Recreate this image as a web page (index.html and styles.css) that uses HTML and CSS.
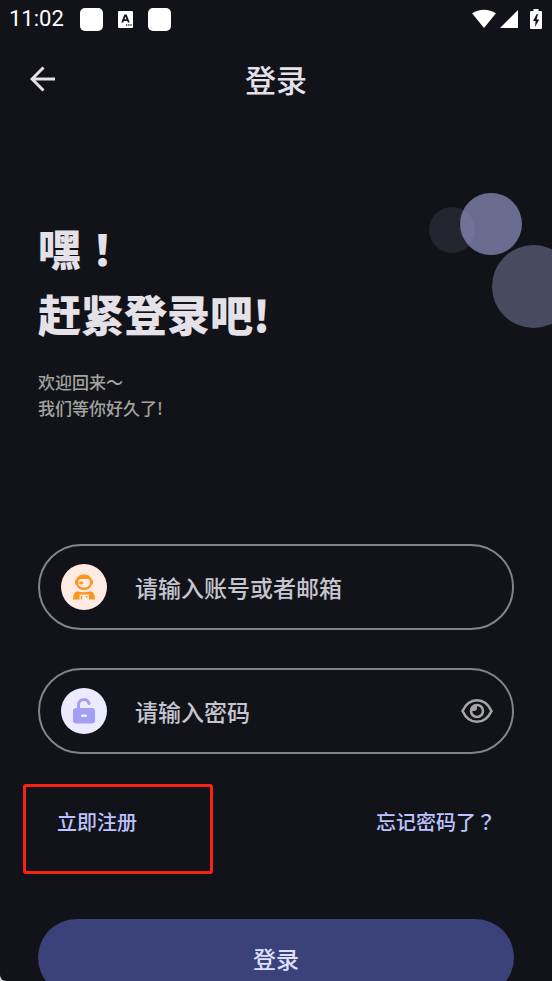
FILE: index.html
```html
<!DOCTYPE html>
<html lang="zh-CN">
<head>
<meta charset="utf-8">
<meta name="viewport" content="width=device-width, initial-scale=1">
<title>登录</title>
<link rel="stylesheet" href="styles.css">
</head>
<body>
<div class="screen">
  <div class="status">
    <span class="time">11:02</span>
    <span class="notice"></span>
    <svg class="notice-a" width="16" height="17" viewBox="0 0 16 17" aria-hidden="true">
      <rect width="15" height="17" rx="1" fill="#fff"/>
      <path d="M4.200 11.500 7 4.500h1l2.800 7M5.500 9.200h4" fill="none" stroke="#121318" stroke-width="1.800"/>
      <path d="M8 14h1.200M10.200 14h1.200M12.400 14h1.200" stroke="#121318" stroke-width="1.300"/>
    </svg>
    <span class="notice"></span>
    <span class="system">
      <svg width="24" height="20" viewBox="0 0 24 20" aria-hidden="true"><path d="M0 4.200Q5.500 .700 12 .700T24 4.200L12 19Z" fill="#fff"/></svg>
      <svg width="18" height="18" viewBox="0 0 18 18" aria-hidden="true"><path d="M18 0V18H0Z" fill="#fff"/></svg>
      <svg width="12" height="20" viewBox="0 0 12 20" aria-hidden="true"><path d="M3.500 0h5v2H11a1 1 0 0 1 1 1v16a1 1 0 0 1-1 1H1a1 1 0 0 1-1-1V3a1 1 0 0 1 1-1h2.500Z" fill="#fff"/><path d="M6.800 5 3 12h2.600L5 18l4.300-7.600H6.600L8 5Z" fill="#121318"/></svg>
    </span>
  </div>

  <header class="appbar">
    <button class="back" type="button" aria-label="返回">
      <svg width="26" height="26" viewBox="0 0 26 26" aria-hidden="true"><path d="M25 13H3M13.500 1.500 2 13l11.500 11.500" fill="none" stroke="#e4e1e9" stroke-width="3"/></svg>
    </button>
    <span class="title">登录</span>
  </header>

  <main>
    <section class="hero">
      <div class="bubbles" aria-hidden="true">
        <span class="bubble small"></span>
        <span class="bubble large"></span>
        <span class="bubble medium"></span>
      </div>
      <h1>嘿<span class="mark" lang="zh-TW">！</span><br>赶紧登录吧!</h1>
      <p>欢迎回来<span class="mark" lang="zh-TW">～</span><br>我们等你好久了!</p>
    </section>

    <form class="form">
      <div class="field">
        <label class="badge account" for="account" aria-label="账号">
          <svg width="22" height="26" viewBox="0 0 22 26" aria-hidden="true">
            <path fill="#fb961c" fill-rule="evenodd" d="M11 .500C6.500 .500 4.200 2.700 3.300 5.500C1.500 6 1.500 10.500 3.300 11C4.500 14 7.500 16 11 16S17.500 14 18.700 11C20.500 10.500 20.500 6 18.700 5.500C17.800 2.700 15.500 .500 11 .500ZM8 5h6.500C16.500 5 17 6.500 17 8.500C17 11.500 14.500 13.500 11 13.500S5 11.500 5 8.500C5 6.500 6 5 8 5Z"/>
            <path d="M5.500 9h5M8.200 7.200v3.600" stroke="#fb961c" stroke-width="1.400"/>
            <path fill="#fb961c" d="M4 17.200Q11 19.500 18 17.200Q22 18.500 22 25.500H16V20.500H6.500v5H0Q0 18.500 4 17.200Z"/>
            <path fill="#fb961c" d="M7.800 22h1.400v3.500H7.800ZM12.800 22h1.700v1.600h-1.700Z"/>
          </svg>
        </label>
        <input id="account" type="text" placeholder="请输入账号或者邮箱">
      </div>

      <div class="field">
        <label class="badge password" for="password" aria-label="密码">
          <svg width="22" height="26" viewBox="0 0 22 26" aria-hidden="true">
            <path d="M5.500 11V7.500C5.500 .200 14.500-.200 16 5.500" fill="none" stroke="#a29ff5" stroke-width="3" stroke-linecap="round"/>
            <rect y="10" width="22" height="15.500" rx="3" fill="#a29ff5"/>
            <rect x="8" y="16.500" width="6" height="2.500" rx="1" fill="#eceaff"/>
          </svg>
        </label>
        <input id="password" type="password" placeholder="请输入密码">
        <button class="reveal" type="button" aria-label="显示密码">
          <svg width="32" height="26" viewBox="0 0 32 26" aria-hidden="true">
            <path d="M1.500 13C5 5.500 10 2.200 16 2.200S27 5.500 30.500 13C27 20.500 22 23.800 16 23.800S5 20.500 1.500 13Z" fill="none" stroke="#a5a6a4" stroke-width="2.600"/>
            <circle cx="16" cy="13" r="6" fill="none" stroke="#a5a6a4" stroke-width="2.600"/>
            <path d="M16 7V10A3 3 0 0 1 13 13H10Q10 7 16 7Z" fill="#a5a6a4"/>
          </svg>
        </button>
      </div>

      <div class="links">
        <a class="register" href="#register">立即注册</a>
        <a href="#forgot">忘记密码了<span class="mark" lang="zh-TW">？</span></a>
      </div>

      <button class="submit" type="submit">登录</button>
    </form>
  </main>
</div>
</body>
</html>
```
FILE: styles.css
```css
*,
*::before {
  box-sizing: border-box;
}

body {
  margin: 0;
  background: #d8d8da;
  font-family: "Noto Sans CJK SC", sans-serif;
}

.screen {
  height: 100vh;
  overflow: hidden;
  border-bottom-left-radius: 6px;
  background: #121318;
  color: #e4e1e9;
}

button {
  padding: 0;
  border: 0;
  background: none;
  color: inherit;
  font: inherit;
  cursor: pointer;
}

svg {
  display: block;
}

.mark {
  font-family: "Noto Sans CJK TC", sans-serif;
}

.status {
  display: flex;
  align-items: center;
  height: 38px;
  padding: 0 10px 0 9px;
  color: #fff;
}

.time {
  margin-right: 16px;
  font: 400 22px/38px Roboto, sans-serif;
}

.notice {
  width: 23px;
  height: 23px;
  border-radius: 5px;
  background: #fff;
}

.notice-a {
  margin: 0 14px 0 15px;
}

.system {
  display: flex;
  align-items: center;
  gap: 4px;
  margin-left: auto;
}

.system svg:last-child {
  margin-left: 8px;
}

.appbar {
  display: grid;
  grid-template-columns: 26px 1fr 26px;
  align-items: center;
  height: 82px;
  padding: 0 30px;
}

.title {
  font-size: 31px;
  font-weight: 500;
  line-height: 40px;
  text-align: center;
}

.hero {
  position: relative;
  padding: 94px 38px 0;
}

h1 {
  margin: 0;
  font-size: 43px;
  font-weight: 900;
  line-height: 66px;
}

.hero p {
  margin: 23px 0 0;
  color: #a3a3a1;
  font-size: 17px;
  font-weight: 500;
  line-height: 26px;
}

.bubbles {
  position: absolute;
  top: 73px;
  right: 0;
  width: 123px;
  height: 136px;
  overflow: hidden;
}

.bubble {
  position: absolute;
  border-radius: 50%;
}

.small {
  top: 14px;
  left: 0;
  width: 46px;
  height: 46px;
  background: #24252f;
}

.large {
  top: 52px;
  left: 63px;
  width: 83px;
  height: 83px;
  background: #484a60;
}

.medium {
  top: 0;
  left: 31px;
  width: 62px;
  height: 62px;
  background: rgba(164, 168, 222, 0.6);
}

.form {
  display: flex;
  flex-direction: column;
  gap: 38px;
  padding: 123px 38px 0;
}

.field {
  display: flex;
  align-items: center;
  height: 86px;
  padding: 0 19px 0 21px;
  border: 2px solid #83848a;
  border-radius: 43px;
}

.badge {
  display: grid;
  flex: none;
  place-items: center;
  width: 46px;
  height: 46px;
  border-radius: 50%;
}

.account {
  background: #ffebe2;
}

.password {
  background: #eceaff;
}

.field input {
  flex: 1;
  min-width: 0;
  height: 46px;
  margin-left: 28px;
  padding: 0;
  border: 0;
  outline: 0;
  background: none;
  color: #e4e1e9;
  font: 500 23px/46px "Noto Sans CJK SC", sans-serif;
}

.field input::placeholder {
  color: #c7c5d0;
  opacity: 1;
}

.links {
  display: flex;
  justify-content: space-between;
  margin-top: 16px;
  padding: 0 18px 0 19px;
  font-size: 20px;
  font-weight: 500;
  line-height: 28px;
}

.links a {
  color: #bcc3ff;
  text-decoration: none;
}

.register {
  position: relative;
}

.register::before {
  position: absolute;
  top: -24px;
  left: -34px;
  width: 190px;
  height: 90px;
  border: 3px solid #f92314;
  border-radius: 3px;
  content: "";
}

.submit {
  height: 77px;
  margin-top: 45px;
  border-radius: 39px;
  background: #3a4279;
  color: #dfe0ff;
  font-size: 23px;
  font-weight: 500;
}
```
